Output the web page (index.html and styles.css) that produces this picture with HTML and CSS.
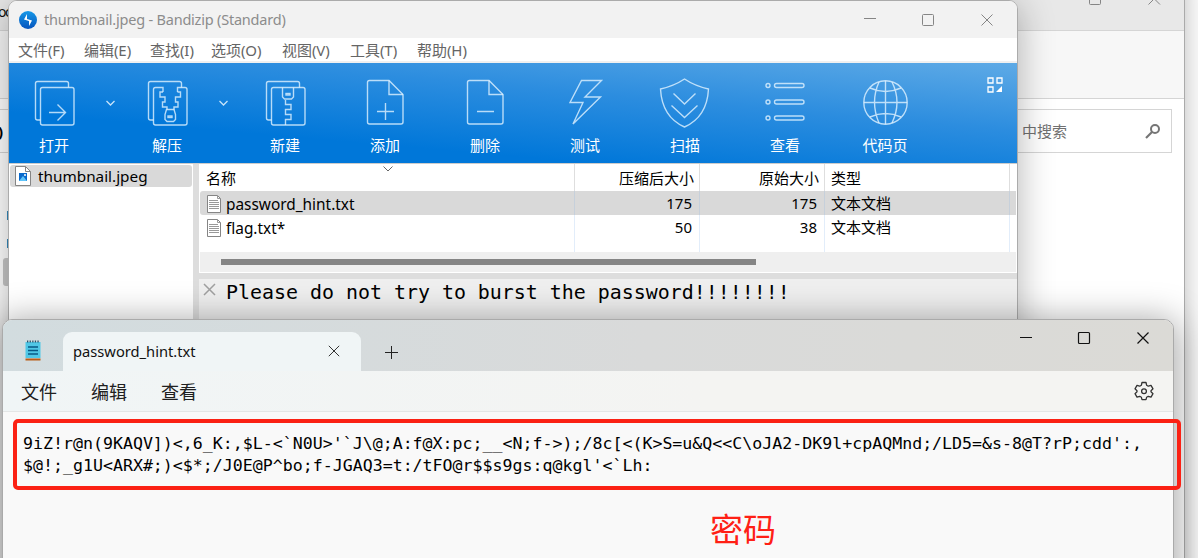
FILE: index.html
```
<!DOCTYPE html>
<html lang="zh-CN">
<head>
<meta charset="utf-8">
<title>thumbnail.jpeg - Bandizip (Standard)</title>
<link rel="stylesheet" href="styles.css">
</head>
<body>
<main class="desktop">
  <section class="explorer">
    <header class="explorer-title">
      <span class="explorer-tab">oc</span>
      <svg class="explorer-controls" width="90" height="12" viewBox="0 0 90 12" fill="none" stroke="#858585"><rect x="7.500" y="-6.500" width="11" height="11" rx="1"/><path d="M66.500 4.500l11.500-11.500M78 4.500l-11.500-11.500"/></svg>
    </header>
    <div class="explorer-tools"></div>
    <div class="explorer-address">
      <div class="address-end"><b>)</b></div>
      <div class="search"><span>中搜索</span>
        <svg width="16" height="16" viewBox="0 0 16 16" fill="none" stroke="#757575" stroke-width="2"><circle cx="10" cy="6" r="4"/><path d="M7 9l-6 6" stroke-width="2.200"/></svg>
      </div>
    </div>
    <div class="explorer-nav"><i class="nav-blue"></i><i class="nav-blue"></i><i class="nav-current"></i></div>
  </section>

  <section class="archiver">
    <header class="arc-title">
      <svg width="18" height="18" viewBox="0 0 18 18"><defs><linearGradient id="logo" x2="0" y2="1"><stop stop-color="#1598e8"/><stop offset="1" stop-color="#0754bd"/></linearGradient></defs><circle cx="9" cy="9" r="9" fill="url(#logo)"/><path d="M8 3v5l5 1.500-3 5.500v-5L5 8.500z" fill="#fff"/></svg>
      <span class="arc-name">thumbnail.jpeg - Bandizip (Standard)</span>
      <svg class="arc-controls" width="130" height="14" viewBox="0 0 130 14" fill="none" stroke="#858585"><path d="M0 5.500h12M117.500 1.500l11 11M128.500 1.500l-11 11"/><rect x="58.500" y="1.500" width="11" height="11" rx="1"/></svg>
    </header>
    <nav class="arc-menu"><span>文件(F)</span><span>编辑(E)</span><span>查找(I)</span><span>选项(O)</span><span>视图(V)</span><span>工具(T)</span><span>帮助(H)</span></nav>
    <div class="ribbon">
      <div class="tool"><svg viewBox="0 0 50 50"><path d="M12.500 43H9.500q-2 0-2-2V6.500q0-2 2-2h29q2 0 2 2v4"/><rect x="12.500" y="10.500" width="33.500" height="37.500" rx="2"/><path d="M21 35.500h16M29.500 27.500l8 8-8 8"/></svg><span>打开</span></div>
      <svg class="drop" width="9" height="6" viewBox="0 0 9 6"><path d="M.500 1l4 4 4-4"/></svg>
      <div class="tool"><svg viewBox="0 0 50 50"><path d="M12.500 43H9.500q-2 0-2-2V6.500q0-2 2-2h29q2 0 2 2v4"/><path d="M22 15v-4.500h-7.500q-2 0-2 2V46q0 2 2 2H44q2 0 2-2V12.500q0-2-2-2h-7.500V15"/><path d="M22 15h-3v5h5v5h-2.500v5H26v2.500M36.500 15h3v5h-5v5H37v5h-4v2.500"/><path d="M25.500 32.500h7.500l1.500 5v5l-2 2h-6.500l-2-2v-5z"/><rect x="27" y="39" width="4" height="1.500"/></svg><span>解压</span></div>
      <svg class="drop" width="9" height="6" viewBox="0 0 9 6"><path d="M.500 1l4 4 4-4"/></svg>
      <div class="tool"><svg viewBox="0 0 50 50"><path d="M12.500 43H9.500q-2 0-2-2V6.500q0-2 2-2h29q2 0 2 2v4"/><rect x="12.500" y="10.500" width="33.500" height="37.500" rx="2"/><path d="M23.500 10.500V20l2 2h7l2-2v-9.500M26.500 23v4.500h5.500v5h-5.500v5h5.500v5h-5.500V48"/><rect x="27" y="16.500" width="4" height="1.500"/></svg><span>新建</span></div>
      <div class="tool wide"><svg viewBox="0 0 50 50"><path d="M29 4.500H9.500q-2 0-2 2V46q0 2 2 2H41q2 0 2-2V18.500z"/><path d="M29 4.500v14h14M17 35.500h17M25.500 27v17"/></svg><span>添加</span></div>
      <div class="tool wide"><svg viewBox="0 0 50 50"><path d="M29 4.500H9.500q-2 0-2 2V46q0 2 2 2H41q2 0 2-2V18.500z"/><path d="M29 4.500v14h14M17 35.500h17"/></svg><span>删除</span></div>
      <div class="tool wide"><svg viewBox="0 0 50 50"><path d="M21.500 4.500h20L25 21h15.500L13 48l10-21.500H10z"/></svg><span>测试</span></div>
      <div class="tool wide"><svg viewBox="0 0 50 50"><path d="M24.500 3Q35 10 48.500 13Q47 41 24.500 51Q2 41 .500 13Q14 10 24.500 3z"/><path d="M13.500 17.500l11 10.500 11-10.500M11.500 29.500l13 12 13-12"/></svg><span>扫描</span></div>
      <div class="tool wide"><svg viewBox="0 0 50 50"><circle cx="8" cy="9.500" r="2"/><circle cx="8" cy="26" r="2"/><circle cx="8" cy="42" r="2"/><rect x="14.500" y="7.500" width="29.500" height="4" rx="2"/><rect x="14.500" y="24" width="29.500" height="4" rx="2"/><rect x="14.500" y="40" width="29.500" height="4" rx="2"/></svg><span>查看</span></div>
      <div class="tool wide"><svg viewBox="0 0 50 50"><circle cx="25.500" cy="26.500" r="21.700"/><path d="M25.500 5v43M4 26.500h43M19 6Q10 26 19 47M32 6Q42 26 32 47M10 12q15.500 7 31 0M10 41q15.500-7 31 0"/></svg><span>代码页</span></div>
      <svg class="layout-icon" width="16" height="16" viewBox="0 0 16 16" fill="none" stroke="#fff" stroke-width="1.300"><path d="M1 1h5v5H1zM10 1h5v5h-5zM1 10h5v5H1z"/><path d="M15 9v6H9z" fill="#fff" stroke="none"/></svg>
    </div>
    <div class="arc-content">
      <aside class="tree">
        <div class="tree-row"><svg width="16" height="20" viewBox="0 0 16 20"><path d="M.500.500h10l5 5v14H.500z" fill="#fff" stroke="#858585"/><path d="M10.500.500v5h5" fill="none" stroke="#858585"/><rect x="4" y="7" width="8" height="8" fill="#0869cc"/><path d="M4 15l4-5 4 5z" fill="#5ec4fa"/><circle cx="10" cy="9" r="1" fill="#fff"/></svg><span>thumbnail.jpeg</span></div>
      </aside>
      <div class="files">
        <svg class="sort" width="10" height="6" viewBox="0 0 10 6" fill="none" stroke="#666"><path d="M.500.500L5 5 9.500.500"/></svg>
        <div class="file-row heading"><span>名称</span><span class="num">压缩后大小</span><span class="num">原始大小</span><span>类型</span></div>
        <div class="file-row selected"><span class="file"><svg width="14" height="18" viewBox="0 0 14 18"><path d="M.500.500h10l3 3v14H.500z" fill="#fff" stroke="#858585"/><path d="M10.500.500v3h3M2 5.500h9M2 7.500h10M2 9.500h10M2 11.500h10M2 13.500h10" fill="none" stroke="#999"/></svg><span class="file-name">password_hint.txt</span></span><span class="num">175</span><span class="num">175</span><span>文本文档</span></div>
        <div class="file-row"><span class="file"><svg width="14" height="18" viewBox="0 0 14 18"><path d="M.500.500h10l3 3v14H.500z" fill="#fff" stroke="#858585"/><path d="M10.500.500v3h3M2 5.500h9M2 7.500h10M2 9.500h10M2 11.500h10M2 13.500h10" fill="none" stroke="#999"/></svg><span class="file-name">flag.txt*</span></span><span class="num">50</span><span class="num">38</span><span>文本文档</span></div>
        <div class="file-row spare"><span></span><span></span><span></span><span></span></div>
        <div class="scroll"><i></i></div>
        <div class="comment"><svg width="13" height="13" viewBox="0 0 13 13" fill="none" stroke="#a0a0a0" stroke-width="1.500"><path d="M1 1l11 11M12 1L1 12"/></svg><span>Please do not try to burst the password!!!!!!!!</span></div>
      </div>
    </div>
  </section>

  <section class="notepad">
    <header class="tabs">
      <svg class="note-logo" width="16" height="21" viewBox="0 0 16 21"><path d="M.500 2h15v16H.500z" fill="#50c7e6"/><path d="M.500 18.500h15v2H.500z" fill="#b95c17"/><path d="M3 7h10M3 10.500h10M3 14h10" stroke="#075985" stroke-width="1.400"/><path d="M2 1.500h13" stroke="#28536b" stroke-width="2" stroke-dasharray="1.300 1.300"/></svg>
      <div class="tab"><span>password_hint.txt</span><svg width="12" height="12" viewBox="0 0 12 12" fill="none" stroke="#333"><path d="M.800.800l10.400 10.400M11.200.800L.800 11.200"/></svg></div>
      <svg class="plus" width="13" height="13" viewBox="0 0 13 13" fill="none" stroke="#222"><path d="M6.500 0v13M0 6.500h13"/></svg>
      <svg class="note-controls" width="130" height="14" viewBox="0 0 130 14" fill="none" stroke="#111" stroke-width="1.200"><path d="M0 6.500h12M117.500 1.500l11 11M128.500 1.500l-11 11"/><rect x="58.500" y="1.500" width="11" height="11" rx="1"/></svg>
    </header>
    <nav class="note-menu"><span>文件</span><span>编辑</span><span>查看</span>
      <svg width="20" height="20" viewBox="0 0 20 20" fill="none" stroke="#333" stroke-width="1.300" stroke-linejoin="round"><path d="M8 1.500h4l.6 2.700 1.700 1 2.700-.8 2 3.400L17 9.700v1.100l2 1.900-2 3.400-2.700-.8-1.700 1-.6 2.400H8l-.6-2.400-1.700-1-2.700.8-2-3.400 2-1.900V9.700L1 7.800l2-3.400 2.700.8 1.700-1z"/><circle cx="10" cy="10.200" r="2.400"/></svg>
    </nav>
    <div class="note-body"><pre class="code">9iZ!r@n(9KAQV])&lt;,6_K:,$L-&lt;`N0U&gt;'`J\@;A:f@X:pc;__&lt;N;f-&gt;);/8c[&lt;(K&gt;S=u&amp;Q&lt;&lt;C\oJA2-DK9l+cpAQMnd;/LD5=&amp;s-8@T?rP;cdd':,
$@!;_g1U&lt;ARX#;)&lt;$*;/J0E@P^bo;f-JGAQ3=t:/tFO@r$$s9gs:q@kgl'&lt;`Lh:</pre></div>
  </section>
  <div class="mark-box"></div>
  <div class="mark-label">密码</div>
</main>
</body>
</html>
```
FILE: styles.css
```
* { box-sizing: border-box; }
body { margin: 0; font-family: "Noto Sans", "Noto Sans CJK SC", sans-serif; font-size: 15px; color: #000; }
svg { display: block; flex-shrink: 0; }
.desktop { position: relative; width: 1198px; height: 558px; overflow: hidden; background: #fcfcfc; }

.explorer { position: absolute; left: -4px; top: -20px; width: 1189px; height: 620px; display: flex; flex-direction: column; background: #fff; border-right: 1px solid #aaa; box-shadow: 0 0 22px rgba(0,0,0,.25); }
.explorer-title { height: 51px; padding: 20px 12px 0 2px; display: flex; justify-content: space-between; background: #e8e8e8; border-bottom: 1px solid #d5d5d5; }
.explorer-tab { color: #111; font-size: 14px; letter-spacing: -1.5px; line-height: 24px; }
.explorer-controls { overflow: hidden; }
.explorer-controls { overflow: visible; }
.explorer-tools { height: 68px; background: #f7f7f7; border-bottom: 1px solid #d5d5d5; }
.explorer-address { height: 64px; padding: 10px 12px 10px 0; display: flex; justify-content: space-between; }
.address-end { width: 20px; padding-left: 1px; border: 1px solid #d5d5d5; line-height: 42px; }
.search { width: 200px; padding: 0 10px 0 49px; display: flex; align-items: center; justify-content: space-between; border: 1px solid #d5d5d5; color: #707070; }
.search span { margin-top: -2px; }
.explorer-nav { width: 16px; padding: 48px 0 0 7px; display: flex; flex-direction: column; }
.nav-blue { width: 9px; height: 9px; margin: 0 0 19px 4px; background: #3489bc; }
.nav-current { height: 28px; margin-top: -9px; border-radius: 3px 0 0 3px; background: #c7c7c7; }

.archiver { position: absolute; left: 8px; top: 0; width: 1010px; height: 600px; border: 1px solid #ababab; border-radius: 9px; overflow: hidden; display: flex; flex-direction: column; background: #fff; box-shadow: 0 5px 36px rgba(0,0,0,.3); }
.arc-title { height: 37px; flex: none; padding: 0 23px 0 10px; display: flex; align-items: center; background: #f2f2f2; color: #8c8c8c; }
.arc-name { margin: -2px 0 0 7px; font-size: 14.5px; letter-spacing: -.21px; }
.arc-controls { margin-left: auto; }
.arc-menu { height: 25px; flex: none; padding-left: 9px; display: grid; grid-template-columns: 66px 66px 61px 71px 68px 67px 60px; align-items: center; font-size: 15px; letter-spacing: -.05px; color: #656565; border-bottom: 2px solid #f0f0f0; white-space: nowrap; }
.ribbon { height: 100px; flex: none; display: grid; grid-template-columns: 90px 23px 90px 23px repeat(7, 100px) 1fr; background: linear-gradient(5deg, #0077d9 27%, #2c8ddf 64%, #5eaae6 100%); color: #fff; }
.tool { display: flex; flex-direction: column; align-items: center; }
.tool svg { width: 50px; height: 50px; margin: 14px 0 6px -2px; overflow: visible; fill: none; stroke: rgba(225,242,255,.8); stroke-width: 1.4; }
.tool.wide svg { margin: 13px 0 7px; }
.tool span { line-height: 24px; font-size: 15px; }
.drop { margin: 37px 0 0 7px; fill: none; stroke: #c7e4fa; stroke-width: 1.3; }
.layout-icon { margin: 14px 14px 0 auto; }
.arc-content { flex: 1; min-height: 0; display: grid; grid-template-columns: 184px 1fr; column-gap: 6px; background: #ddd; border-top: 1px solid #ccc; }
.tree { padding: 1px; background: #fff; }
.tree-row { height: 22px; padding-left: 5px; display: flex; align-items: center; gap: 7px; border-radius: 3px; background: #d9d9d9; font-size: 15.3px; }
.files { position: relative; display: flex; flex-direction: column; background: #fff; }
.sort { position: absolute; left: 184px; top: 2px; }
.file-row { position: relative; flex: none; height: 24px; margin-left: 1px; margin-right: 1px; padding-right: 6px; display: grid; grid-template-columns: 375px 125px 125px 185px; line-height: 24px; }
.file-row > span { padding-left: 6px; border-right: 1px solid #e2edfa; white-space: nowrap; }
.heading { height: 27px; line-height: 29px; }
.heading > span { border-right-color: #dedede; }
.selected { background: #d9d9d9; border-radius: 3px 0 0 3px; }
.selected > span { border-right-color: #c6d0db; }
.file-row .num { padding-right: 7px; text-align: right; }
.heading .num { padding-right: 5px; }
.file-row .file { padding-left: 7px; display: flex; align-items: center; gap: 5px; font-size: 15.4px; }
.file-name { padding-top: 2px; }
.spare { height: 13px; }
.scroll { height: 20px; flex: none; margin: 0 1px 1px; padding: 7px 0 0 21px; background: #efefef; }
.scroll i { display: block; width: 535px; height: 6px; background: #858585; }
.comment { flex: 1; padding: 4px 4px; display: flex; align-items: flex-start; gap: 10px; border-top: 6px solid #ddd; background: #efefef; font: 19.93px/20px "DejaVu Sans Mono", monospace; white-space: pre; }

.notepad { position: absolute; left: 2px; top: 319px; width: 1172px; height: 270px; border: 1px solid #aaa; border-radius: 10px; overflow: hidden; display: flex; flex-direction: column; background: #f9f9f9; box-shadow: 0 4px 34px 4px rgba(0,0,0,.34); }
.tabs { height: 51px; flex: none; padding: 0 23px 0 22px; display: flex; background: linear-gradient(90deg, #d2dcdf, #d9dada 55%, #dbdad6); }
.note-logo { margin-top: 20px; }
.tab { width: 298px; height: 39px; margin: 12px 0 0 22px; padding: 0 21px 0 10px; display: flex; align-items: center; justify-content: space-between; border-radius: 9px 9px 0 0; background: #f0f5f6; font-size: 14.7px; color: #111; }
.tab span { margin-top: -2px; }
.tab svg { margin-top: -2px; }
.plus { margin: 26px 0 0 24px; }
.note-controls { margin: 11px 0 0 auto; }
.note-menu { height: 41px; flex: none; padding: 0 19px 0 18px; display: flex; align-items: center; gap: 34px; background: linear-gradient(90deg, #f0f5f6, #f4f4f2 60%); border-bottom: 1px solid #e4e6e6; font-size: 18px; color: #202020; }
.note-menu svg { margin-left: auto; }
.note-body { flex: 1; padding: 21px 0 0 20px; }
.code { margin: 0; font: 16.6px/22px "DejaVu Sans Mono", monospace; }
.mark-box { position: absolute; left: 13px; top: 418.5px; width: 1168px; height: 71px; border: 4px solid #fb2114; border-radius: 5px; }
.mark-label { position: absolute; left: 710px; top: 506px; font-size: 33px; line-height: 48px; color: #ff2015; }
```
